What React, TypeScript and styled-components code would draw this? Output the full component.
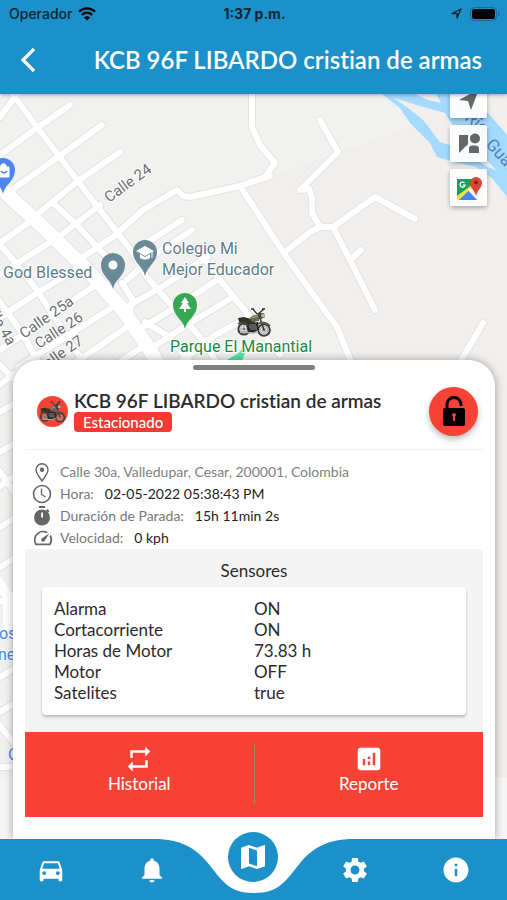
import React from 'react';
import styled, { createGlobalStyle } from 'styled-components';
import {
  MdAnalytics,
  MdDirectionsCar,
  MdInfo,
  MdMap,
  MdNotifications,
  MdRepeat,
  MdSettings,
  MdSpeed,
} from 'react-icons/md';

const blue = '#1b90c9';
const red = '#f64336';
const appFont = '"Lato", "Open Sans", sans-serif';
const systemFont = '"Inter", "Roboto", sans-serif';

const GlobalStyle = createGlobalStyle`
  * { box-sizing: border-box; }
  body {
    margin: 0;
    background: #f5f5f5;
    font-family: ${appFont};
    font-variant-ligatures: none;
    color: #2b2b2b;
  }
  button { font: inherit; color: inherit; border: 0; padding: 0; background: none; cursor: pointer; }
  svg { display: block; }
`;

const Screen = styled.div`
  display: flex;
  flex-direction: column;
  min-height: 100vh;
`;

const Header = styled.header`
  position: relative;
  z-index: 2;
  background: ${blue};
  box-shadow: 0 1px 4px rgba(0, 0, 0, 0.35);
`;

const StatusBar = styled.div`
  display: grid;
  grid-template-columns: 1fr auto 1fr;
  align-items: center;
  height: 27px;
  padding: 0 7px 0 9px;
  font: 500 14px ${systemFont};
  color: #0b2531;
`;

const StatusGroup = styled.div<{ $end?: boolean }>`
  display: flex;
  align-items: center;
  gap: ${(p) => (p.$end ? 8 : 6)}px;
  justify-content: ${(p) => (p.$end ? 'flex-end' : 'flex-start')};
`;

const Clock = styled.time`
  font-weight: 700;
`;

const TitleBar = styled.div`
  display: flex;
  align-items: center;
  justify-content: space-between;
  height: 67px;
  padding: 0 25px 2px 18px;
  color: #fff;
`;

const BackButton = styled.button`
  display: grid;
  place-items: center;
`;

const ScreenTitle = styled.h1`
  margin: 0;
  font-size: 24px;
  line-height: 32px;
  font-weight: 600;
  white-space: nowrap;
`;

const Main = styled.main`
  position: relative;
  display: flex;
  flex: 1;
  flex-direction: column;
  justify-content: flex-end;
  overflow: hidden;
  padding: 200px 12px 0 13px;
`;

const MapDrawing = styled.svg`
  position: absolute;
  inset: 0;
  width: 100%;
  height: 100%;
`;

const MapControls = styled.div`
  position: absolute;
  top: -13px;
  right: 20px;
  display: grid;
  gap: 7px;
`;

const MapControl = styled.button`
  display: grid;
  place-items: center;
  width: 37px;
  height: 37px;
  border-radius: 2px;
  background: rgba(255, 255, 255, 0.94);
  box-shadow: 0 2px 5px rgba(0, 0, 0, 0.3);
`;

const Sheet = styled.section`
  position: relative;
  padding: 5px 12px 22px;
  border-radius: 26px 26px 0 0;
  background: #fff;
  box-shadow: 0 0 9px rgba(0, 0, 0, 0.35);
`;

const Handle = styled.div`
  width: 122px;
  height: 5px;
  margin: 0 auto;
  border-radius: 3px;
  background: #7f7f7f;
`;

const Vehicle = styled.div`
  display: flex;
  align-items: center;
  gap: 6px;
  height: 80px;
  padding: 3px 5px 0 12px;
  border-bottom: 1px solid #f1f1f1;
`;

const Avatar = styled.div`
  display: grid;
  place-items: center;
  width: 31px;
  height: 31px;
  border-radius: 50%;
  background: ${red};
`;

const VehicleText = styled.div`
  flex: 1;
  min-width: 0;
`;

const VehicleName = styled.h2`
  margin: 0;
  font-size: 19px;
  line-height: 22px;
  font-weight: 600;
  white-space: nowrap;
`;

const Badge = styled.span`
  display: block;
  width: fit-content;
  padding: 0 9px;
  border-radius: 4px;
  background: #f43a33;
  color: #fff;
  font-size: 15px;
  line-height: 20px;
  font-weight: 500;
`;

const LockButton = styled.button`
  display: grid;
  place-items: center;
  width: 49px;
  height: 49px;
  border-radius: 50%;
  background: ${red};
  box-shadow: 0 3px 6px rgba(0, 0, 0, 0.28);
`;

const Details = styled.dl`
  margin: 0;
  padding: 11px 7px 0;
`;

const Detail = styled.div`
  display: flex;
  align-items: center;
  height: 22px;
  font-size: 14px;
  line-height: 22px;
`;

const DetailIcon = styled.span`
  display: grid;
  place-items: center;
  width: 20px;
  margin-right: 8px;
  color: #666;
`;

const Label = styled.dt`
  margin-right: 11px;
  color: #777;
`;

const Value = styled.dd<{ $muted?: boolean }>`
  margin: 0;
  color: ${(p) => (p.$muted ? '#808080' : '#222')};
`;

const Sensors = styled.section`
  padding: 11px 17px 17px;
  background: #f4f4f4;
`;

const SensorsTitle = styled.h3`
  margin: 0 0 5px;
  text-align: center;
  font-size: 17px;
  line-height: 22px;
  font-weight: 400;
`;

const SensorCard = styled.div`
  padding: 11px 12px 12px;
  border-radius: 4px;
  background: #fff;
  box-shadow: 0 2px 3px rgba(0, 0, 0, 0.24);
`;

const SensorTable = styled.table`
  width: 100%;
  table-layout: fixed;
  border-collapse: collapse;
  font-size: 17px;
  line-height: 21px;
  th, td { padding: 0; text-align: left; font-weight: 400; }
`;

const Actions = styled.div`
  display: grid;
  grid-template-columns: 1fr 1px 1fr;
  height: 85px;
  background: ${red};
  color: #fff;
`;

const Action = styled.button`
  display: flex;
  flex-direction: column;
  align-items: center;
  padding-top: 12px;
  font-size: 17px;
  line-height: 20px;
`;

const Separator = styled.span`
  margin: 12px 0;
  background: #a98079;
`;

const TabBar = styled.nav`
  position: relative;
  z-index: 2;
  display: grid;
  grid-template-columns: repeat(5, 1fr);
  grid-template-rows: 61px;
  align-items: center;
  color: #fff;
`;

const TabBackdrop = styled.div`
  position: absolute;
  inset: 0;
  z-index: -1;
  display: grid;
  grid-template-columns: 1fr 200px 1fr;
`;

const Fill = styled.span`
  background: ${blue};
`;

const Tab = styled.button<{ $active?: boolean }>`
  display: grid;
  place-items: center;
  justify-self: center;
  width: ${(p) => (p.$active ? 50 : 44)}px;
  height: ${(p) => (p.$active ? 50 : 44)}px;
  margin-bottom: ${(p) => (p.$active ? 25 : 0)}px;
  border-radius: 50%;
  background: ${(p) => (p.$active ? blue : 'transparent')};
`;

function Motorcycle({ size, x, y }: { size: number; x?: number; y?: number }) {
  return (
    <svg x={x} y={y} width={size} height={size} viewBox="0 0 36 36" aria-hidden="true">
      <g fill="none" stroke="#3b3b3b" strokeWidth="2">
        <circle cx="8" cy="25" r="5.6" />
        <circle cx="28" cy="26" r="5.8" />
      </g>
      <g fill="none" stroke="#9a9a96" strokeWidth="0.8">
        <circle cx="8" cy="25" r="3.4" />
        <circle cx="28" cy="26" r="3.8" />
        <path d="M4 25h8M8 21v8M24 26h8M28 22v8M25 23l6 6M31 23l-6 6" />
      </g>
      <circle cx="8" cy="25" r="1.4" fill="#777" />
      <circle cx="28" cy="26" r="1.6" fill="#888" />
      <path d="M2 14l6-1 7 2 5 1-2 4-9 1-6-3z" fill="#33312b" />
      <path d="M14 14c2-3 6-4 10-2l-1 5-7 1z" fill="#68684e" />
      <path d="M16 14c2-1 4-2 6-1" stroke="#b8b68d" fill="none" />
      <path d="M10 20l12-2 1 8-4 3h-7z" fill="#25282a" />
      <path d="M13 21h7M13 23h8M14 25h7" stroke="#989a98" strokeWidth="0.9" />
      <path d="M4 28l14 1 4-2" stroke="#b0b0ac" strokeWidth="1.6" fill="none" />
      <path d="M23 11l5 15M21 10l-4-5M22 10l6-5M26 5h3M15 5h3" stroke="#343434" strokeWidth="1.4" fill="none" />
      <path d="M21 9h7l1 4-4 2-3-2z" fill="#44433a" />
      <circle cx="27" cy="11.5" r="2" fill="#bbb690" />
      <path d="M22 20c3-2 9-2 12 2" stroke="#555543" strokeWidth="1.8" fill="none" />
      <path d="M2 20c2-2 8-2 10 1" stroke="#45443a" strokeWidth="1.6" fill="none" />
    </svg>
  );
}

function BackIcon() {
  return (
    <svg width="20" height="26" viewBox="0 0 20 26" fill="none" stroke="#fff" strokeWidth="3.2">
      <path d="M16 2L5 13l11 11" />
    </svg>
  );
}

function WifiIcon() {
  return (
    <svg width="18" height="14" viewBox="0 0 18 14" fill="none" stroke="#000" strokeWidth="2.3">
      <path d="M1 4.600c4.600-4.400 11.400-4.400 16 0M3.900 7.800c3-2.800 7.200-2.800 10.200 0" />
      <path d="M9 13.500L5.900 10.400c1.800-1.600 4.400-1.600 6.200 0z" fill="#000" stroke="none" />
    </svg>
  );
}

function LocationIcon() {
  return (
    <svg width="11" height="11" viewBox="0 0 11 11" fill="none" stroke="#0b2531" strokeWidth="1.3" strokeLinejoin="round">
      <path d="M1 5.500L10 1 6 10V5.500z" />
    </svg>
  );
}

function BatteryIcon() {
  return (
    <svg width="30" height="14" viewBox="0 0 30 14">
      <rect x="0.5" y="0.5" width="26" height="13" rx="4" fill="none" stroke="#136a94" />
      <rect x="2" y="2" width="23" height="10" rx="2.5" fill="#000" />
      <path d="M28 4.500q3 2.500 0 5z" fill="#136a94" />
    </svg>
  );
}

function PinIcon() {
  return (
    <svg width="14" height="19" viewBox="0 0 14 19" fill="none" stroke="#666" strokeWidth="1.4">
      <path d="M7 18C4 13.500 1 10.500 1 6.800a6 6 0 0 1 12 0C13 10.500 10 13.500 7 18z" />
      <circle cx="7" cy="6.8" r="2.2" fill="#666" stroke="none" />
    </svg>
  );
}

function ClockIcon() {
  return (
    <svg width="20" height="20" viewBox="0 0 20 20" fill="none" stroke="#666" strokeWidth="1.6">
      <circle cx="10" cy="10" r="8.5" />
      <path d="M9.500 4.500v6l4 2.500" strokeWidth="1.3" />
    </svg>
  );
}

function StopwatchIcon() {
  return (
    <svg width="20" height="20" viewBox="0 0 20 20" fill="#666">
      <circle cx="10" cy="11.5" r="8" />
      <path d="M7 0h6v2H7zM15.500 3l2 2-1.500 1.500-2-2z" />
      <path d="M9.200 6.500h1.800v4a.9 1.200 0 0 1-1.800 0z" fill="#fff" />
    </svg>
  );
}

function UnlockIcon() {
  return (
    <svg width="24" height="32" viewBox="0 0 24 32">
      <path d="M5 14V9.500a7 7 0 0 1 14 0V11" fill="none" stroke="#000" strokeWidth="3" />
      <rect x="1" y="13" width="22" height="18" rx="2" fill="#000" />
      <path d="M12 18a2 2 0 0 1 1 3.700V26h-2v-4.300A2 2 0 0 1 12 18z" fill={red} />
    </svg>
  );
}

function ArrowIcon() {
  return (
    <svg width="22" height="22" viewBox="0 0 22 22" fill="#666">
      <path d="M21 0L1 11l9 1 3 9z" />
    </svg>
  );
}

function StreetViewIcon() {
  return (
    <svg width="22" height="22" viewBox="0 0 22 22" fill="#666">
      <circle cx="17" cy="5.5" r="5" />
      <path d="M1 2h9v8.500q0 2-2 2.500L1 20z" />
      <path d="M14 12.500h3.500q3.500 0 3.500 3.500v4H11v-4.500q0-3 3-3z" />
    </svg>
  );
}

function GoogleMapsIcon() {
  return (
    <svg width="26" height="26" viewBox="0 0 26 26">
      <rect x="1" y="4" width="21" height="21" rx="1" fill="#e8e8e8" />
      <path d="M1 4h17v5L1 23z" fill="#16a05d" />
      <path d="M1 21L17 9l3 1L4 25H1z" fill="#ffdc43" />
      <path d="M3 25l9.500-9L21 25z" fill="#4285f4" />
      <path d="M14 13l8 10v2L12.500 15z" fill="#fff" />
      <path d="M20 21c-1-6-6-8-6-13a6 6 0 0 1 12 0c0 5-5 7-6 13z" fill="#de4436" />
      <circle cx="20" cy="7.5" r="2" fill="#7a231d" />
      <path d="M8.500 7.800a2.600 2.600 0 1 0 .7 2.400H6.800" fill="none" stroke="#fff" strokeWidth="1.3" />
    </svg>
  );
}

const minorRoads = [
  'M8 88L37 127L77 180L100 210L133 253L147 277L173 307L200 337L218 364',
  'M70 105L37 128L0 155L-6 160',
  'M102 125L58 157L12 190',
  'M120 152L78 181L40 212',
  'M100 205L60 236L13 266L-5 278',
  'M32 220L0 243',
  'M20 90L0 117',
  'M270 176L240 186L190 197L183 196L177 190L143 210L113 237L83 257',
  'M182 220L143 245',
  'M192 230L157 253L127 280',
  'M207 257L165 285L130 305',
  'M217 280L178 306L133 333',
  'M233 297L190 323L153 347',
  'M247 318L215 335L180 362',
  'M200 253L220 280L247 313L280 355',
  'M53 203L77 225L97 247L112 262',
  'M122 283L133 300L130 310',
  'M145 322L168 336L190 362',
  'M-4 240L15 262L37 290L55 318L72 345L85 364',
  'M80 267L37 293L-4 320',
  'M97 284L56 312L0 350',
  'M113 307L66 337L18 367',
  'M130 325L88 354L60 372',
  'M145 345L112 367',
  'M-5 295L20 330L40 365',
  'M252 90V127L260 145L275 163L265 177L240 186L283 252L310 290L337 327L352 364',
  'M320 120L338 152L300 190L309 189L312 197V213L320 227L333 227L375 197L415 219',
  'M320 227L310 232L285 252',
  'M333 227L350 260L375 310',
  'M350 260L361 250',
  'M483 323L460 362',
  'M-5 388L20 370M-5 415L20 400M-5 455L20 440M-5 490L20 472M-5 530L20 515M-5 570L20 555M-5 605L20 590M-5 680L20 665M-5 715L20 700',
  'M-5 360L20 385M-5 465L20 500M-5 720L20 750M-5 767H20',
];

function MapPin({ x, y, color, children }: { x: number; y: number; color: string; children?: React.ReactNode }) {
  return (
    <g transform={`translate(${x} ${y})`}>
      <path d="M0 24C-2 14-12 11-12 0a12 12 0 0 1 24 0C12 11 2 14 0 24z" fill={color} />
      {children}
    </g>
  );
}

function CityMap() {
  return (
    <MapDrawing viewBox="0 94 507 745" preserveAspectRatio="xMidYMin slice" role="img" aria-label="Mapa">
      <rect y="94" width="507" height="745" fill="#f1f1f0" />
      <path d="M240 187L507 94V839H352V360z" fill="#f0efee" />
      <path d="M377 90L462 90L487 112L507 135V197L492 178L476 167L455 162L437 157L430 143L410 123L400 108z" fill="#a5daff" />
      <path d="M394 98L420 106L445 113L462 140L466 149L452 146L440 142L423 120L412 111z" fill="#f0efee" />
      <path d="M411 92L435 92L441 103L428 100z" fill="#f0efee" />
      <path d="M470 155L485 158L497 171L484 165z" fill="#f0efee" />
      <g fill="none" strokeLinejoin="round" strokeLinecap="round">
        <g stroke="#e2e3e5" strokeWidth="8">
          {minorRoads.map((d) => <path key={d} d={d} />)}
        </g>
        <path d="M-8 178L10 197L43 227L90 273L123 310L150 350L160 368" stroke="#e2e3e5" strokeWidth="16" />
        <g stroke="#fff" strokeWidth="6">
          {minorRoads.map((d) => <path key={d} d={d} />)}
        </g>
        <path d="M-8 178L10 197L43 227L90 273L123 310L150 350L160 368" stroke="#fff" strokeWidth="14" />
        <path d="M-5 578L8 596V625" stroke="#fff" strokeWidth="10" />
      </g>
      <path d="M226 362L240 354L246 346L240 362z" fill="#58e3a5" stroke="#58e3a5" strokeWidth="3" />
      <rect y="777" width="507" height="62" fill="#f5f5f5" />
      <g fontFamily='"Roboto", sans-serif' fontSize="16" stroke="#fff" strokeWidth="2" paintOrder="stroke">
        <g fill="#6b6d70" fontSize="15">
          <text transform="translate(109 203) rotate(-36)">Calle 24</text>
          <text transform="translate(24 339) rotate(-35)">Calle 25a</text>
          <text transform="translate(39 349) rotate(-33)">Calle 26</text>
          <text transform="translate(40 374) rotate(-35)">Calle 27</text>
          <text transform="translate(-19 300) rotate(60)">Calle 4a</text>
        </g>
        <g fill="#5b7d89">
          <text x="3" y="278">God Blessed</text>
          <text x="162" y="254">Colegio Mi</text>
          <text x="162" y="275">Mejor Educador</text>
        </g>
        <text x="170" y="352" fill="#21893f">Parque El Manantial</text>
        <g fill="#4282e8">
          <text x="-1" y="639">os</text>
          <text x="-2" y="660">ne</text>
          <text x="8" y="760">G</text>
        </g>
      </g>
      <g fill="#527fbd" fontFamily='"Roboto", sans-serif' fontSize="17">
        <text transform="translate(464 119) rotate(40)">Río</text>
        <text transform="translate(485 145) rotate(48)">Guatapurí</text>
      </g>
      <MapPin x={3} y={170} color="#4c86f0">
        <path d="M-5-3H6V7H-5zM-2-3V-5q3-3 5 0v2" fill="#fff" stroke="#fff" />
        <path d="M-2 1q3 4 6 0" fill="none" stroke="#4c86f0" strokeWidth="1.5" />
      </MapPin>
      <MapPin x={113} y={265} color="#6b8a97">
        <circle r="4.5" fill="#fff" />
      </MapPin>
      <MapPin x={145} y={252} color="#6b8a97">
        <path d="M0-6L9-1 0 4-9-1z" fill="#fff" />
        <path d="M-5 2v4q5 3 10 0V2L0 5z" fill="#fff" />
        <path d="M7 0v6" stroke="#fff" />
      </MapPin>
      <MapPin x={185} y={305} color="#34a853">
        <path d="M0-8L4-2H2L6 4H1V7H-1V4H-6L-2-2H-4z" fill="#fff" />
      </MapPin>
      <Motorcycle x={236} y={304} size={36} />
    </MapDrawing>
  );
}

const details = [
  { icon: <PinIcon />, value: 'Calle 30a, Valledupar, Cesar, 200001, Colombia' },
  { icon: <ClockIcon />, label: 'Hora:', value: '02-05-2022 05:38:43 PM' },
  { icon: <StopwatchIcon />, label: 'Duración de Parada:', value: '15h 11min 2s' },
  { icon: <MdSpeed size={22} />, label: 'Velocidad:', value: '0 kph' },
];

const sensors = [
  ['Alarma', 'ON'],
  ['Cortacorriente', 'ON'],
  ['Horas de Motor', '73.83 h'],
  ['Motor', 'OFF'],
  ['Satelites', 'true'],
];

const tabs = [
  { name: 'Vehículos', icon: <MdDirectionsCar size={30} /> },
  { name: 'Notificaciones', icon: <MdNotifications size={30} /> },
  { name: 'Mapa', icon: <MdMap size={32} />, active: true },
  { name: 'Ajustes', icon: <MdSettings size={30} /> },
  { name: 'Información', icon: <MdInfo size={30} /> },
];

export default function App() {
  return (
    <Screen>
      <GlobalStyle />
      <Header>
        <StatusBar>
          <StatusGroup>Operador <WifiIcon /></StatusGroup>
          <Clock>1:37 p.m.</Clock>
          <StatusGroup $end><LocationIcon /><BatteryIcon /></StatusGroup>
        </StatusBar>
        <TitleBar>
          <BackButton aria-label="Volver"><BackIcon /></BackButton>
          <ScreenTitle>KCB 96F LIBARDO cristian de armas</ScreenTitle>
        </TitleBar>
      </Header>
      <Main>
        <CityMap />
        <MapControls>
          <MapControl aria-label="Mi ubicación"><ArrowIcon /></MapControl>
          <MapControl aria-label="Street View"><StreetViewIcon /></MapControl>
          <MapControl aria-label="Google Maps"><GoogleMapsIcon /></MapControl>
        </MapControls>
        <Sheet>
          <Handle />
          <Vehicle>
            <Avatar><Motorcycle size={27} /></Avatar>
            <VehicleText>
              <VehicleName>KCB 96F LIBARDO cristian de armas</VehicleName>
              <Badge>Estacionado</Badge>
            </VehicleText>
            <LockButton aria-label="Desbloquear"><UnlockIcon /></LockButton>
          </Vehicle>
          <Details>
            {details.map((d) => (
              <Detail key={d.value}>
                <DetailIcon>{d.icon}</DetailIcon>
                {d.label && <Label>{d.label}</Label>}
                <Value $muted={!d.label}>{d.value}</Value>
              </Detail>
            ))}
          </Details>
          <Sensors>
            <SensorsTitle>Sensores</SensorsTitle>
            <SensorCard>
              <SensorTable>
                <tbody>
                  {sensors.map(([name, value]) => (
                    <tr key={name}>
                      <th scope="row">{name}</th>
                      <td>{value}</td>
                    </tr>
                  ))}
                </tbody>
              </SensorTable>
            </SensorCard>
          </Sensors>
          <Actions>
            <Action><MdRepeat size={30} />Historial</Action>
            <Separator />
            <Action><MdAnalytics size={30} />Reporte</Action>
          </Actions>
        </Sheet>
      </Main>
      <TabBar>
        <TabBackdrop>
          <Fill />
          <svg width="200" height="61" viewBox="0 0 200 61">
            <rect width="200" height="61" fill="#fff" />
            <path d="M0 0C28 0 42 10 53 23C68 41 74 54 100 54S132 41 147 23C158 10 172 0 200 0V61H0z" fill={blue} />
          </svg>
          <Fill />
        </TabBackdrop>
        {tabs.map((tab) => (
          <Tab key={tab.name} $active={tab.active} aria-label={tab.name}>{tab.icon}</Tab>
        ))}
      </TabBar>
    </Screen>
  );
}
